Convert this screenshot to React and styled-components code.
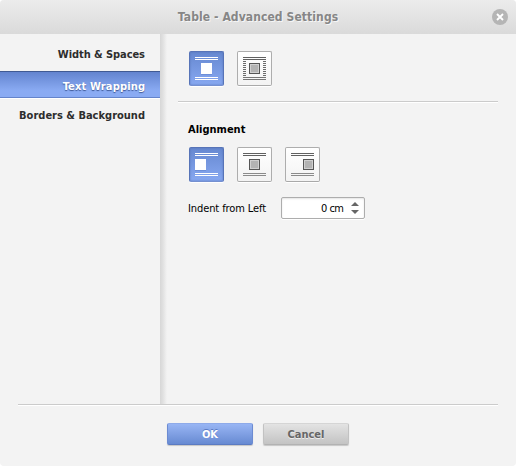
import React from "react";
import styled, { createGlobalStyle } from "styled-components";

const Global = createGlobalStyle`
  * { box-sizing: border-box; }
  html, body { margin: 0; padding: 0; background: #fff; }
  body { font-family: "DejaVu Sans Condensed", "DejaVu Sans", sans-serif; font-size: 11px; color: #000; }
`;

const Dialog = styled.div`
  width: 516px;
  height: 466px;
  display: flex;
  flex-direction: column;
  overflow: hidden;
  background: #f3f3f3;
  border-radius: 4px;
`;

const TitleBar = styled.header`
  position: relative;
  height: 34px;
  flex: none;
  display: flex;
  align-items: center;
  justify-content: center;
  background: linear-gradient(#ececec, #dadada);
`;

const Text = styled.span`
  display: inline-block;
  white-space: nowrap;
  line-height: 14px;
  font-family: "DejaVu Sans", sans-serif;
  font-stretch: condensed;
  font-weight: ${(p) => (p.$bold ? 700 : 400)};
  font-size: ${(p) => p.$size || 11}px;
  letter-spacing: ${(p) => p.$track || 0}px;
  margin-right: ${(p) => -(p.$track || 0)}px;
`;

const Title = styled(Text)`
  color: #868686;
  text-shadow: 1px 1px 0 #f6f6f6;
`;

const Close = styled.button`
  position: absolute;
  top: 9px;
  right: 8px;
  width: 16px;
  height: 16px;
  padding: 0;
  border: 0;
  background: none;
  line-height: 0;
`;

const Body = styled.div`
  display: flex;
  height: 370px;
  flex: none;
`;

const Sidebar = styled.nav`
  width: 160px;
  display: flex;
  flex-direction: column;
  padding-top: 5px;
`;

const Tab = styled.div`
  display: flex;
  justify-content: flex-end;
  align-items: center;
  height: ${(p) => (p.$active ? 27 : 30)}px;
  padding: ${(p) => (p.$active ? "4px" : "2px")} 15px 0 0;
  margin: ${(p) => (p.$active ? "2px 0" : "0")};
  color: ${(p) => (p.$active ? "#fff" : "#2d2d2d")};
  background: ${(p) => (p.$active ? "linear-gradient(#6384cf, #8aabf3 75%)" : "none")};
  border-top: ${(p) => (p.$active ? "1px solid #405a93" : "0")};
  border-bottom: ${(p) => (p.$active ? "1px solid #6484cb" : "0")};
  box-shadow: ${(p) => (p.$active ? "0 1px 0 #fff" : "none")};
  text-shadow: ${(p) => (p.$active ? "0 1px 1px #3d5795" : "none")};
`;

const Divider = styled.div`
  width: 7px;
  background: linear-gradient(90deg, #d7d7d7, #e0e0e0 40%, #f3f3f3);
`;

const Content = styled.main`
  flex: 1;
  padding: 17px 18px 0 21px;
`;

const IconRow = styled.div`
  display: flex;
  gap: 13px;
  padding-left: 1px;
`;

const IconButton = styled.button`
  width: 35px;
  height: 35px;
  padding: 0;
  border: 1px solid ${(p) => (p.$active ? "#5774b8" : "#adadad")};
  border-bottom-color: ${(p) => (p.$active ? "#7590d0" : "#a9a9a9")};
  border-radius: 2px;
  background: ${(p) => (p.$active ? "linear-gradient(#6688d0, #87a8f1)" : "linear-gradient(#fff, #f3f3f3)")};
  box-shadow: ${(p) => (p.$active ? "inset 0 0 2px #5573b5, " : "")}0 1px 0 #fff;
  line-height: 0;
`;

const Rule = styled.hr`
  height: 2px;
  border: 0;
  background: linear-gradient(#cbcbcb 50%, #fff 50%);
  margin: ${(p) => p.$margin || "0"};
  flex: none;
`;

const Heading = styled(Text)`
  display: block;
  margin-bottom: 10px;
`;

const FieldRow = styled.label`
  display: flex;
  align-items: center;
  height: 22px;
  margin-top: 15px;
`;

const FieldName = styled.span`
  width: 93px;
  height: 14px;
  padding-top: 1px;
  line-height: 0;
`;

const Spinner = styled.div`
  width: 84px;
  height: 22px;
  padding-top: 2px;
  display: flex;
  align-items: center;
  justify-content: flex-end;
  border: 1px solid #adadad;
  border-radius: 2px;
  background: #fff;
  box-shadow: inset 0 1px 2px #e3e3e3, 0 1px 0 #fff;
`;

const Stepper = styled.span`
  width: 20px;
  height: 20px;
  margin-top: -2px;
  line-height: 0;
`;

const Footer = styled.footer`
  display: flex;
  gap: 10px;
  padding: 17px 0 0 167px;
`;

const Button = styled.button`
  width: 86px;
  height: 22px;
  padding: 2px 0 0;
  display: flex;
  align-items: center;
  justify-content: center;
  border: 1px solid;
  border-radius: 2px;
  border-color: ${(p) => (p.$primary ? "#8eaae9 #6c8bd2 #5b7bc2" : "#d5d5d5 #c2c2c2 #b2b2b2")};
  background: ${(p) => (p.$primary ? "linear-gradient(#98b5f4, #678ad2)" : "linear-gradient(#e3e3e3, #c3c3c3)")};
  color: ${(p) => (p.$primary ? "#fff" : "#666")};
  text-shadow: ${(p) => (p.$primary ? "0 -1px 0 #5b7bc4" : "0 1px 0 #eee")};
  box-shadow: 0 1px 1px #c6c6c6;
`;

function WrapIcon({ x = 12, active, dashed }) {
  const top = active ? "#fff" : "#606060";
  const bottom = active ? "#fff" : dashed ? "#777" : "#8b8b8b";
  return (
    <svg width="33" height="33" viewBox="1 1 33 33" shapeRendering="crispEdges">
      {[6, 8].map((y) => <rect key={y} x="6" y={y} width="23" height="1" fill={top} />)}
      {[26, 28].map((y) => <rect key={y} x="6" y={y} width="23" height="1" fill={bottom} />)}
      {dashed && [10, 12, 14, 16, 18, 20, 22, 24].map((y) => (
        <path key={y} d={`M6 ${y}h3v1h-3zM26 ${y}h3v1h-3z`} fill="#6c6c6c" />
      ))}
      {active ? (
        <>
          <rect x={x} y="13" width="11" height="11" fill="#5c7cc5" opacity=".45" />
          <rect x={x} y="12" width="11" height="11" fill="#fff" />
        </>
      ) : (
        <>
          <rect x={x} y="12" width="11" height="11" fill="#565656" />
          <rect x={x + 1} y="13" width="9" height="9" fill="#d0d0d0" />
          <rect x={x + 2} y="14" width="7" height="7" fill="#b3b3b3" />
        </>
      )}
    </svg>
  );
}

export default function App() {
  return (
    <>
      <Global />
      <Dialog>
        <TitleBar>
          <Title $bold $size={12} $track={0.09}>Table - Advanced Settings</Title>
          <Close aria-label="Close">
            <svg width="16" height="16">
              <circle cx="8" cy="8" r="8" fill="#b5b5b5" />
              <path d="M5 5l6 6M11 5l-6 6" stroke="#fff" strokeWidth="1.9" />
            </svg>
          </Close>
        </TitleBar>
        <Body>
          <Sidebar>
            <Tab><Text $bold $track={-0.07}>Width &amp; Spaces</Text></Tab>
            <Tab $active><Text $bold $track={0.15}>Text Wrapping</Text></Tab>
            <Tab><Text $bold>Borders &amp; Background</Text></Tab>
          </Sidebar>
          <Divider />
          <Content>
            <IconRow>
              <IconButton $active aria-label="Inline"><WrapIcon active /></IconButton>
              <IconButton aria-label="Around"><WrapIcon dashed /></IconButton>
            </IconRow>
            <Rule $margin="15px 0 20px -10px" />
            <Heading $bold>Alignment</Heading>
            <IconRow>
              <IconButton $active aria-label="Left"><WrapIcon active x={6} /></IconButton>
              <IconButton aria-label="Center"><WrapIcon /></IconButton>
              <IconButton aria-label="Right"><WrapIcon x={18} /></IconButton>
            </IconRow>
            <FieldRow>
              <FieldName><Text $track={-0.1}>Indent from Left</Text></FieldName>
              <Spinner>
                <Text $track={-0.5}>0 cm</Text>
                <Stepper>
                  <svg width="20" height="20">
                    <path d="M7 8l4-4 4 4zM7 12h8l-4 4z" fill="#666" />
                  </svg>
                </Stepper>
              </Spinner>
            </FieldRow>
          </Content>
        </Body>
        <Rule $margin="0 18px" />
        <Footer>
          <Button $primary><Text $bold>OK</Text></Button>
          <Button><Text $bold>Cancel</Text></Button>
        </Footer>
      </Dialog>
    </>
  );
}
